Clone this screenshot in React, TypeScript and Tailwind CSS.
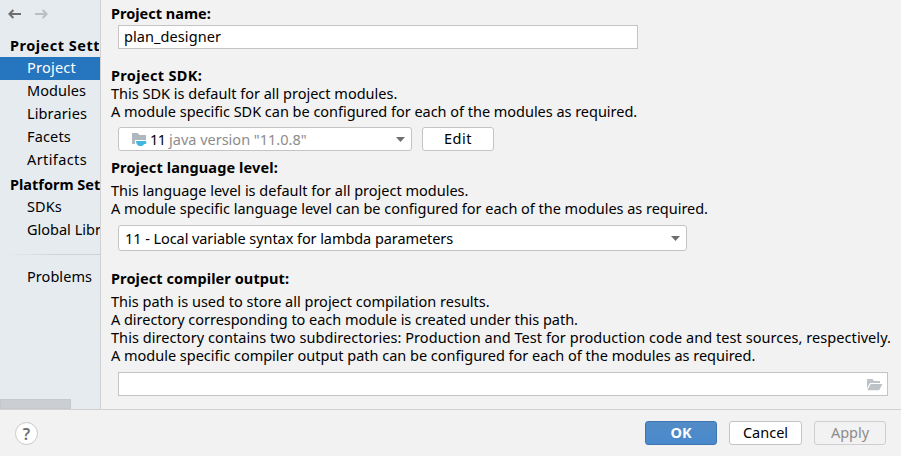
import type { ReactNode } from "react";

function NavItem({ children, selected = false, spacing = "" }: { children: ReactNode; selected?: boolean; spacing?: string }) {
  return (
    <div
      className={`h-[23px] shrink-0 whitespace-nowrap pl-[27px] leading-[21px] ${spacing} ${
        selected ? "bg-[#2675bf] text-white" : "text-black"
      }`}
    >
      {children}
    </div>
  );
}

function Caret() {
  return (
    <svg width="9" height="6" viewBox="0 0 9 6" className="shrink-0">
      <path d="M0 1h9L4.5 6z" fill="#6e6e6e" />
    </svg>
  );
}

function BackArrow({ color, flip = false }: { color: string; flip?: boolean }) {
  return (
    <svg width="13" height="11" viewBox="0 0 13 11" className={flip ? "-scale-x-100" : ""} fill="none" stroke={color} strokeWidth="2">
      <path d="M1.5 5h11.5M5.4 1L1.4 5l4 4" />
    </svg>
  );
}

function SdkIcon() {
  return (
    <svg width="16" height="16" viewBox="0 0 16 16" className="shrink-0">
      <path d="M1 2h5.5l2 2H15v5H4v4H1z" fill="#afb8bf" />
      <path d="M5 10h9.4a1.6 1.6 0 0 1 0 3h-1.3A4.6 4.6 0 0 1 11 15H8C6 14 5 12.2 5 10z" fill="#40b6e0" />
    </svg>
  );
}

function FolderIcon() {
  return (
    <svg width="16" height="12" viewBox="0 0 16 12" className="shrink-0" fill="#bdc3c8">
      <path d="M0 0h5.2l1.8 2h6v2H3L0 9.5z" />
      <path d="M3.7 5H15.4l-3.2 6.3H0.3z" />
    </svg>
  );
}

export default function App() {
  return (
    <div className="flex h-[456px] w-[901px] flex-col overflow-hidden bg-[#f2f2f2] font-['Noto_Sans',sans-serif] text-[14.5px] leading-[18px] text-black">
      <div className="flex h-[409px] shrink-0">
        <aside className="flex w-[101px] shrink-0 flex-col overflow-hidden border-r border-[#d1d1d1] bg-[#e6ebf0]">
          <div className="flex h-9 shrink-0 items-start gap-[14px] pt-[9px] pl-2">
            <BackArrow color="#6e6e6e" />
            <BackArrow color="#bbbec1" flip />
          </div>
          <div className="mr-px h-[21px] shrink-0 overflow-hidden pl-[10px] font-bold whitespace-nowrap tracking-[0.5px]">Project Settings</div>
          <NavItem selected spacing="tracking-[0.23px]">Project</NavItem>
          <NavItem spacing="tracking-[0.05px]">Modules</NavItem>
          <NavItem spacing="tracking-[0.12px]">Libraries</NavItem>
          <NavItem spacing="tracking-[0.15px]">Facets</NavItem>
          <NavItem spacing="tracking-[0.39px]">Artifacts</NavItem>
          <div className="h-6 shrink-0 pt-[3px] pl-[10px] font-bold whitespace-nowrap">Platform Settings</div>
          <NavItem spacing="tracking-[0.1px]">SDKs</NavItem>
          <NavItem>Global Libraries</NavItem>
          <div className="mt-3 mb-[11px] h-px shrink-0 bg-linear-to-r from-[#e6ebf0] from-5% to-[#cfd3d7] to-60%" />
          <NavItem spacing="tracking-[0.05px]">Problems</NavItem>
          <div className="mt-auto h-[10px] w-[71px] shrink-0 border border-[#c5c9cd] bg-[#cbcfd4]" />
        </aside>

        <main className="flex min-w-0 flex-1 flex-col pl-[10px] whitespace-nowrap">
          <h2 className="mt-1 h-[21px] font-bold">Project name:</h2>
          <div className="ml-[7px] h-6 w-[520px] border border-[#c4c4c4] bg-white pt-px pl-[5px] tracking-[0.08px]">plan_designer</div>

          <h2 className="mt-[17px] h-[18px] font-bold tracking-[0.33px]">Project SDK:</h2>
          <p>This SDK is default for all project modules.</p>
          <p className="tracking-[-0.025px]">A module specific SDK can be configured for each of the modules as required.</p>
          <div className="mt-[7px] ml-[7px] flex h-6 gap-[10px]">
            <div className="flex w-[294px] items-center rounded-[3px] border border-[#c4c4c4] bg-white pr-[6px] pl-[12px]">
              <SdkIcon />
              <span className="ml-[3px] w-[19px] pb-px tracking-[-0.6px]">11</span>
              <span className="flex-1 pb-px text-[#8c8c8c]">java version "11.0.8"</span>
              <Caret />
            </div>
            <button className="w-[72px] rounded-[3px] border border-[#c4c4c4] bg-white pb-0.5 tracking-[0.5px]">Edit</button>
          </div>

          <h2 className="mt-[7px] h-[23px] font-bold tracking-[0.12px]">Project language level:</h2>
          <p>This language level is default for all project modules.</p>
          <p className="tracking-[-0.025px]">A module specific language level can be configured for each of the modules as required.</p>
          <div className="mt-2 ml-[7px] flex h-[26px] w-[569px] shrink-0 items-center justify-between rounded-[3px] border border-[#c4c4c4] bg-white pr-[6px] pl-[6px] tracking-[-0.07px]">
            <span>11 - Local variable syntax for lambda parameters</span>
            <Caret />
          </div>

          <h2 className="mt-[18px] h-[23px] font-bold tracking-[0.09px]">Project compiler output:</h2>
          <p>This path is used to store all project compilation results.</p>
          <p className="tracking-[-0.03px]">A directory corresponding to each module is created under this path.</p>
          <p className="tracking-[0.06px]">This directory contains two subdirectories: Production and Test for production code and test sources, respectively.</p>
          <p className="tracking-[-0.01px]">A module specific compiler output path can be configured for each of the modules as required.</p>
          <div className="mt-2 ml-[7px] flex h-6 w-[770px] shrink-0 items-center justify-end border border-[#c4c4c4] bg-white pt-px pr-1">
            <FolderIcon />
          </div>
        </main>
      </div>

      <footer className="flex flex-1 items-start border-t border-[#d1d1d1] pt-[11px] pr-[15px] pl-[15px]">
        <button className="mt-px flex size-[23px] items-center justify-center rounded-full border border-[#c9c9c9] bg-white text-[16px] leading-none font-semibold text-[#6e6e6e]">?</button>
        <div className="ml-auto flex h-6 gap-3">
          <button className="w-[72px] rounded-[3px] border border-[#3d75b2] bg-linear-to-b from-[#528cc7] to-[#4989cc] pb-0.5 font-bold text-white">OK</button>
          <button className="w-[73px] rounded-[3px] border border-[#c4c4c4] bg-white pb-0.5">Cancel</button>
          <button className="w-[72px] rounded-[3px] border border-[#cfcfcf] pb-0.5 text-[#8c8c8c]">Apply</button>
        </div>
      </footer>
    </div>
  );
}
